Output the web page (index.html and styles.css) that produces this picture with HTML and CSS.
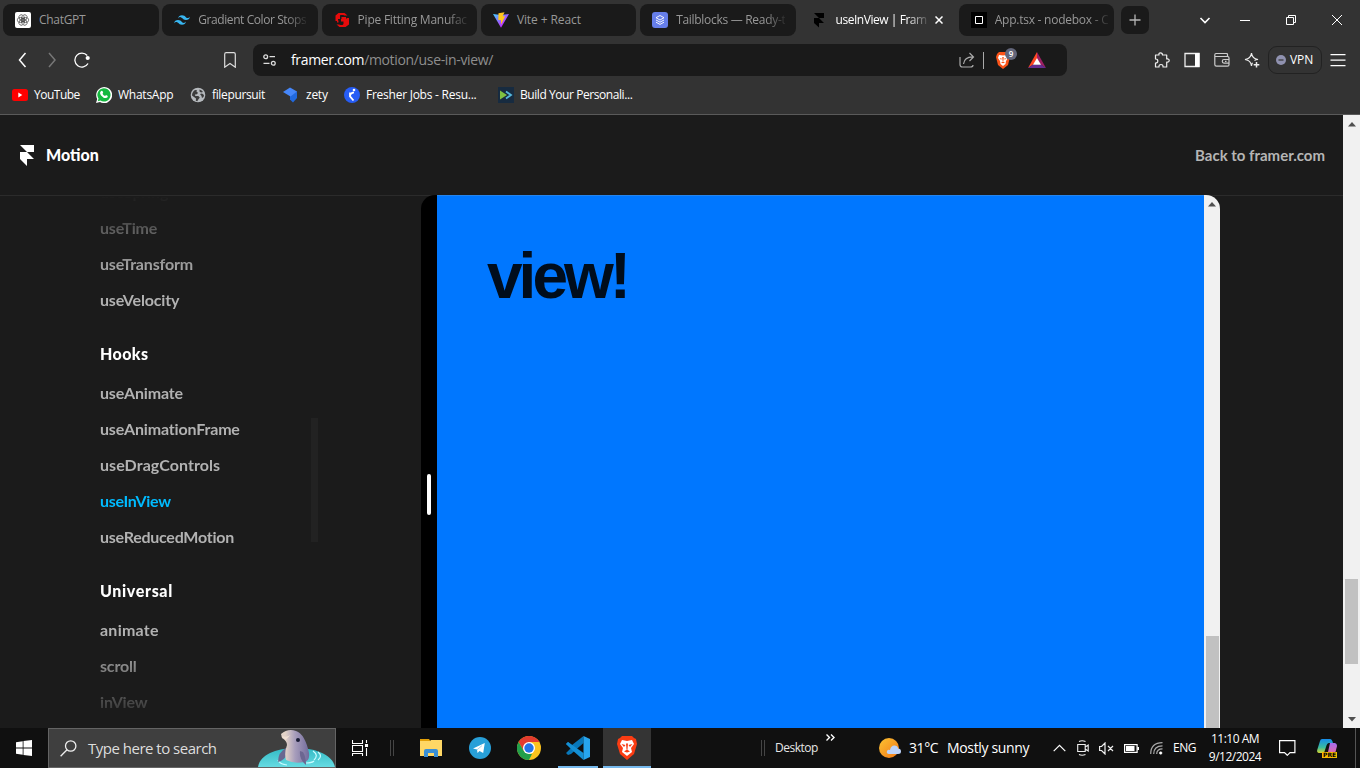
FILE: index.html
```html
<!DOCTYPE html>
<html lang="en">
<head>
<meta charset="utf-8">
<title>useInView | Framer for Developers</title>
<link rel="stylesheet" href="styles.css">
</head>
<body>
<header class="chrome">
  <div class="tabs">
    <div class="tab"><svg width="16" height="16" viewBox="0 0 16 16"><rect width="16" height="16" rx="2" fill="#fff"/><g fill="none" stroke="#333" stroke-width=".6"><ellipse cx="8" cy="5.700" rx="2.600" ry="3.500" transform="rotate(30 8 8)"/><ellipse cx="8" cy="5.700" rx="2.600" ry="3.500" transform="rotate(90 8 8)"/><ellipse cx="8" cy="5.700" rx="2.600" ry="3.500" transform="rotate(150 8 8)"/><ellipse cx="8" cy="5.700" rx="2.600" ry="3.500" transform="rotate(210 8 8)"/><ellipse cx="8" cy="5.700" rx="2.600" ry="3.500" transform="rotate(270 8 8)"/><ellipse cx="8" cy="5.700" rx="2.600" ry="3.500" transform="rotate(330 8 8)"/></g></svg><span class="tab-title">ChatGPT</span></div>
    <div class="tab"><svg width="16" height="16" viewBox="0 0 24 24"><path fill="#38b6f1" d="M12 4.800q-4.800 0-6 4.800 1.800-2.400 4.200-1.800c.9.2 1.600.9 2.300 1.600C13.700 10.600 15 12 18 12q4.800 0 6-4.800-1.800 2.400-4.200 1.800c-.9-.2-1.600-.9-2.300-1.600C16.300 6.200 15 4.800 12 4.800zM6 12q-4.800 0-6 4.800 1.800-2.400 4.200-1.800c.9.2 1.600.9 2.300 1.600 1.200 1.200 2.500 2.600 5.500 2.600q4.800 0 6-4.800-1.800 2.400-4.200 1.800c-.9-.2-1.600-.9-2.300-1.600C10.300 13.400 9 12 6 12z"/></svg><span class="tab-title t-fade t-gradient">Gradient Color Stops</span></div>
    <div class="tab"><svg width="16" height="16" viewBox="0 0 16 16"><path fill="#e60b0b" d="M4.500 1h6l3 2.500h-3L9 3H6.500L6 3.500V7H4v2H1.500V3.500zM11.500 15h-6L2.500 12.500H5l1.500.5h2l1-1V9.500H7V7h5.500V6H15v6.500zM7.500 5H12v2H9.500v1.500H4.500v2H3V8.500h4.500z"/></svg><span class="tab-title t-fade t-pipe">Pipe Fitting Manufac</span></div>
    <div class="tab"><svg width="16" height="16" viewBox="0 0 16 16"><defs><linearGradient id="vite" x2="1" y2="1"><stop stop-color="#41d1ff"/><stop offset=".7" stop-color="#bd34fe"/></linearGradient></defs><path fill="url(#vite)" d="M0 2l8 1 8-1-8 13.800z"/><path fill="#ffc51c" d="M5.500 1.200l6-1-1.800 4h2.500L8 12.500V8H5.300z"/></svg><span class="tab-title t-vite">Vite + React</span></div>
    <div class="tab"><svg width="16" height="16" viewBox="0 0 16 16"><rect width="16" height="16" rx="3" fill="#667eea"/><g fill="none" stroke="#fff" stroke-width=".9"><path d="M8 3.500L12 5.700 8 8 4 5.700zM4 8l4 2.200L12 8M4 10.200l4 2.200 4-2.200"/></g></svg><span class="tab-title t-fade t-tail">Tailblocks — Ready-t</span></div>
    <div class="tab tab-active"><svg width="16" height="16" viewBox="0 0 16 16"><path d="M3 1h10v5H8zM3 6h5l5 5H8v4.500L3 11z"/></svg><span class="tab-title t-fade t-view">useInView | Fram</span><svg class="close" width="8" height="8" viewBox="0 0 8 8"><path d="M.5.5l7 7M7.500.5l-7 7" stroke="#fff" stroke-width="1.500"/></svg></div>
    <div class="tab"><svg width="16" height="16" viewBox="0 0 16 16"><path d="M0 0h16v16H0z"/><path fill="none" stroke="#fff" stroke-width="1" d="M4.500 4.500h7v7h-7z"/></svg><span class="tab-title t-fade t-app">App.tsx - nodebox - C</span></div>
    <div class="new-tab"><svg width="12" height="12" viewBox="0 0 12 12"><path d="M6 .5v11M.5 6h11" stroke="#b5b5b5" stroke-width="1.300"/></svg></div>
    <div class="window-controls">
      <svg width="12" height="12" viewBox="0 0 12 12"><path d="M1.500 4L6 8.500 10.500 4" fill="none" stroke="#fff" stroke-width="1.600"/></svg>
      <svg width="10" height="12" viewBox="0 0 10 12"><path d="M0 6.500h10" stroke="#fff"/></svg>
      <svg class="restore" width="11" height="12" viewBox="0 0 11 12"><path d="M.5 3.500h7v7h-7zM2.500 3V1.500h7v7H8" fill="none" stroke="#fff"/></svg>
      <svg width="12" height="12" viewBox="0 0 12 12"><path d="M1 1l10 10M11 1L1 11" stroke="#fff"/></svg>
    </div>
  </div>

  <div class="toolbar">
    <svg width="16" height="16" viewBox="0 0 16 16"><path d="M11.500 1L5.500 8l6 7" fill="none" stroke="#fff" stroke-width="1.500"/></svg>
    <svg width="16" height="16" viewBox="0 0 16 16"><path d="M5 1l6 7-6 7" fill="none" stroke="#777" stroke-width="1.500"/></svg>
    <svg width="17" height="16" viewBox="0 0 17 16"><path d="M14 11.500A7 7 0 1 1 13.200 3.500" fill="none" stroke="#fff" stroke-width="1.300"/><circle cx="13.700" cy="6" r="2.100" fill="#fff"/></svg>
    <svg width="16" height="16" viewBox="0 0 16 16"><path d="M2.700 2.200q0-1.500 1.500-1.500h7.600q1.500 0 1.500 1.500v13L8 11.500l-5.300 3.700z" fill="none" stroke="#ddd" stroke-width="1.200"/></svg>
    <div class="address">
      <svg width="13" height="12" viewBox="0 0 13 12" fill="none" stroke="#ddd" stroke-width="1.300"><circle cx="2.700" cy="2.700" r="1.900"/><circle cx="10.300" cy="9.300" r="1.900"/><path d="M6.500 2.700H12M.5 9.300H6.500"/></svg>
      <span class="url"><b>framer.com</b>/motion/use-in-view/</span>
      <svg width="17" height="16" viewBox="0 0 17 16" fill="none" stroke="#aaa" stroke-width="1.200"><path d="M1 5v7.500Q1 15 3.500 15h8q2.500 0 2.500-2M10.500 1l4 4-4 4M14.500 5q-9-.5-10 7"/></svg>
      <i class="divider"></i>
      <div class="shield"><svg width="16" height="18" viewBox="0 0 16 18"><path fill="#fb5419" d="M4 1h8l2 2 1 3-2 8-5 4-5-4L1 6l1-3z"/><path fill="#fff" d="M4 4l4 .5 4-.5 1 3-2 3-.5 3L8 15l-2.500-2L5 10 3 7z"/><path fill="#fb5419" d="M4.500 7l2.500.7-1 1zM11.500 7L9 7.700l1 1zM7.200 6h1.600l-.4 4h-.8zM6 11.500l2-1 2 1-2 .8z"/></svg><span class="count">9</span></div>
      <svg width="18" height="16" viewBox="0 0 18 16"><path fill="#ff4724" d="M9 0L0 16l9-6z"/><path fill="#9e1f63" d="M9 0l9 16-9-6z"/><path fill="#662d91" d="M0 16l5-3.500h8l5 3.500z"/><path fill="#fff" d="M9 6l4 6.800H5z"/></svg>
    </div>
    <svg width="16" height="16" viewBox="0 0 16 16"><path d="M1.500 3H5Q4.500.8 6.500.8T8.500 3h4.200v4q2.500-.3 2.500 1.500t-2.500 1.500v5H9q.2-2.500-2-2.500T5 15H1.500v-4q2.300 0 2.300-2T1.500 7z" fill="none" stroke="#eee" stroke-width="1.200" stroke-linejoin="round"/></svg>
    <svg width="16" height="16" viewBox="0 0 16 16"><path d="M1 1.500h14v13H1z" fill="none" stroke="#eee" stroke-width="1.300"/><path fill="#fff" d="M11 1h4.500v14H11z"/></svg>
    <svg width="16" height="16" viewBox="0 0 16 16" fill="none" stroke="#ccc" stroke-width="1.200"><path d="M13.500 5V2.500q0-1-1-1H2Q.8 1.500.8 3v9.500q0 1.700 1.700 1.700h11q1.500 0 1.500-1.500V6q0-1.500-1.500-1.500H1M15.500 7.500H10q-1.700 0-1.700 1.800t1.700 1.800h5.500M11 9.300h1.500"/></svg>
    <svg width="16" height="16" viewBox="0 0 16 16"><path d="M7.500 1Q8 6.500 14 7.500q-2.500.3-3.500 1M7.500 1Q7 6.500 1 7.500q6 .8 6.500 6.500.2-2 1-3.300" fill="none" stroke="#eee" stroke-width="1.200"/><path d="M12.500 10v5.500M9.700 12.700h5.600" stroke="#eee" stroke-width="1.500"/></svg>
    <div class="vpn"><svg width="10" height="10" viewBox="0 0 10 10"><circle cx="5" cy="5" r="5" fill="#9092b0"/><path d="M2.500 5h5" stroke="#333" stroke-width="1.200"/></svg><span>VPN</span></div>
    <svg width="16" height="14" viewBox="0 0 16 14"><path d="M.5 1.700h15M.5 7.200h15M.5 12.700h15" stroke="#fff" stroke-width="1.200"/></svg>
  </div>

  <nav class="bookmarks">
    <a><svg width="16" height="16" viewBox="0 0 16 16"><rect y="2" width="16" height="12" rx="2.500" fill="#f00"/><path fill="#fff" d="M6.300 5.500v5l4-2.500z"/></svg><span class="b-yt">YouTube</span></a>
    <a><svg width="16" height="16" viewBox="0 0 16 16"><path fill="#fff" d="M0 16l1.200-4A8 8 0 1 1 4 14.900z"/><path fill="#15b83f" d="M1.800 14.200l.7-2.600A6.600 6.600 0 1 1 4.500 13.500z"/><path fill="#fff" d="M5.500 3.800l1 .2.700 1.700-.7 1q1 1.700 2.600 2.300l.9-1 1.800.9q.1 2-2 2.200-2.500 0-4.700-2.700-2.300-2.800.4-4.600z"/></svg><span>WhatsApp</span></a>
    <a><svg width="16" height="16" viewBox="0 0 16 16"><circle cx="8" cy="8" r="7.300" fill="#b5b9bd"/><path fill="#3c3c3c" d="M2 8.500Q2 5 5 3l2 .3-.5 1.500 1.500 1-1 1.500-2 .2.300 1.500h3l1.500 1.500-1.500 2-1 1.800-1.500-.5L6 11.500 4 10zM9.500 2.500q2.500.7 3.500 2.500l-2 .5-1.500-1zM10 7l2-.5 2 1.500-.5 2-1.500 1-.5-2z"/></svg><span class="b-file">filepursuit</span></a>
    <a><svg width="16" height="16" viewBox="0 0 16 16"><path fill="#2169df" d="M7 6l7-1.500V11l-4 4.500-3-3z"/><path fill="#4687fa" d="M0 5L7 .5l7 4L7.500 9.500z"/></svg><span class="b-zety">zety</span></a>
    <a><svg width="16" height="16" viewBox="0 0 16 16"><circle cx="8" cy="8" r="8" fill="#275df5"/><circle cx="10" cy="3" r="1.300" fill="#fff"/><path d="M10 5.300Q6 6 6 9.300l3.500 4.200M6 5.500V9" fill="none" stroke="#fff" stroke-width="1.800"/></svg><span>Fresher Jobs - Resu...</span></a>
    <a><svg width="16" height="16" viewBox="0 0 16 16"><path fill="#172b40" d="M0 0h16v16H0z"/><path fill="#7fc242" d="M2 3.500L9 8l-7 4.500z"/><path d="M8 4.500L13 8l-5 3.500" fill="none" stroke="#55b9de" stroke-width="1.800"/></svg><span class="b-build">Build Your Personali...</span></a>
  </nav>
</header>

<main class="viewport">
  <div class="site">
    <div class="site-header">
      <div class="brand"><svg width="14" height="21" viewBox="0 0 14 21"><path fill="#fff" d="M0 0h14v7H7zM0 7h7l7 7H7v7l-7-7z"/></svg><span>Motion</span></div>
      <a class="back">Back to framer.com</a>
    </div>
    <div class="site-body">
      <aside class="sidebar">
        <ul>
          <li>useSpring</li><li>useTime</li><li>useTransform</li><li>useVelocity</li>
          <li class="group">Hooks</li>
          <li>useAnimate</li><li>useAnimationFrame</li><li class="wide">useDragControls</li><li class="current">useInView</li><li class="tight">useReducedMotion</li>
          <li class="group universal">Universal</li>
          <li class="animate">animate</li><li>scroll</li><li>inView</li>
        </ul>
        <div class="side-thumb"></div>
      </aside>
      <section class="sandbox">
        <div class="resize"><i></i></div>
        <div class="demo"><h1>view!</h1></div>
        <div class="scrollbar"><svg width="8" height="5" viewBox="0 0 8 5"><path fill="#505050" d="M4 0l4 4.500H0z"/></svg><i class="thumb inner-thumb"></i></div>
      </section>
    </div>
  </div>
  <div class="scrollbar page-scroll"><svg width="8" height="5" viewBox="0 0 8 5"><path fill="#505050" d="M4 0l4 4.500H0z"/></svg><i class="thumb"></i><svg width="8" height="5" viewBox="0 0 8 5"><path fill="#505050" d="M0 0h8L4 4.500z"/></svg></div>
</main>

<footer class="taskbar">
  <svg class="start" width="16" height="16" viewBox="0 0 16 16"><path fill="#fff" d="M0 2.200L6.700 1.200v6.400H0zM7.500 1.100L16 0v7.600H7.500zM0 8.400h6.700v6.400L0 13.800zM7.500 8.400H16V16l-8.500-1.100z"/></svg>
  <div class="search">
    <svg width="17" height="17" viewBox="0 0 17 17" fill="none" stroke="#eee" stroke-width="1.300"><circle cx="10.700" cy="6" r="5.200"/><path d="M7 9.700L.6 16.300"/></svg>
    <span>Type here to search</span>
    <svg class="dolphin" width="77" height="38" viewBox="0 0 77 38"><defs><linearGradient id="fin" x1="0" x2="1"><stop offset=".15" stop-color="#e3d3c8"/><stop offset=".5" stop-color="#a79dbb"/><stop offset="1" stop-color="#716b9d"/></linearGradient><linearGradient id="pool" x2="0" y2="1"><stop stop-color="#31b9c4"/><stop offset="1" stop-color="#66dbe2"/></linearGradient></defs><path fill="url(#pool)" d="M0 38C2 25 19 19 39 19s36 8 38 19z"/><path d="M20 31q1 4 9 5M55 22q6 4 1 9M60 23q5 4 0 8M48 34q6 0 8-2" fill="none" stroke="#c9fbff" stroke-width="1.200"/><path fill="#696891" d="M28 19q-8 4-8 14 7-2 9-8z"/><path fill="url(#fin)" d="M23 5Q30-1 38 2q9 3 13 22 1 8-5 9-10 2-18-2-2-7 1-15 0-4-5-7z"/><path fill="#6c6691" d="M42 22q-1 8 6 14 0-8-3-13z"/><path fill="#f0dfd3" d="M23.500 7q5 2 9-1l-5 5z"/><circle cx="40" cy="11" r="2" fill="#191c36"/></svg>
  </div>
  <svg class="task-view" width="17" height="16" viewBox="0 0 17 16" fill="none" stroke="#fff" stroke-width="1.100"><path d="M.5 0v3.500h10V0M.5 5.500h10v6H.5zM.5 16v-2.500h10V16M14.500 0v3M14.500 8v8"/><path fill="#fff" d="M13.500 4.500h2v2h-2z"/></svg>
  <i class="grip"></i>
  <svg class="explorer" width="22" height="20" viewBox="0 0 22 20"><path fill="#e3a008" d="M0 1h9l2 3H0z"/><path fill="#ffd765" d="M0 3h10l1-1h11v16H0z"/><path fill="#3b8fd4" d="M4 19v-6q0-2 2-2h10q2 0 2 2v6h-4v-4H8v4z"/></svg>
  <svg class="telegram" width="22" height="22" viewBox="0 0 22 22"><circle cx="11" cy="11" r="11" fill="#289fd8"/><path fill="#fff" d="M4 11.500L15.800 6l-1.600 10-3.700-2-2 2-.5-3.500z"/><path d="M8 12.800l5-4.200" stroke="#9ccbe4" stroke-width=".8"/></svg>
  <svg class="gchrome" width="24" height="24" viewBox="0 0 24 24"><circle cx="12" cy="12" r="12" fill="#fcc31e"/><path fill="#e33b2e" d="M1.600 6A12 12 0 0 1 22.400 6H12l-5.200 9z"/><path fill="#229f4b" d="M1.600 6L6.800 15 12 18l3 0-3 6A12 12 0 0 1 1.600 6z"/><circle cx="12" cy="12" r="6" fill="#fff"/><circle cx="12" cy="12" r="4.700" fill="#2473e8"/></svg>
  <div class="app app-code"><svg width="24" height="24" viewBox="0 0 24 24"><path fill="#0877b9" d="M0 8l2-2 4 3L17.500 0v7L5 18l-3 1-2-2 5-5z"/><path fill="#148fd4" d="M0 8l2-2 15.500 11v7L5.500 13.500z"/><path fill="#27a5ee" d="M17.500 0L24 3v18l-6.500 3z"/></svg></div>
  <div class="app app-brave"><svg width="20" height="24" viewBox="0 0 20 24"><path fill="#fa3c13" d="M5 0h10l2 2 2 1 1 5-3 10-7 6-7-6L0 8l1-5 2-1z"/><path fill="#fff" d="M5 4l5 1 5-1 2 4-3 4 1 4-5 4-5-4 1-4-3-4z"/><path fill="#fa3c13" d="M4.500 8l4 1-1.500 2zM15.500 8l-4 1 1.500 2zM9 7.500h2l-.5 6h-1zM7 15.500l3-2 3 2-3 1z"/></svg></div>
  <i class="grip grip-right"></i>
  <span class="desktop">Desktop</span>
  <svg class="more" width="9" height="7" viewBox="0 0 9 7"><path d="M.5.5l3 3-3 3M5 .5l3 3-3 3" fill="none" stroke="#fff" stroke-width="1.400"/></svg>
  <svg class="sun" width="23" height="21" viewBox="0 0 23 21"><defs><linearGradient id="sun" x1="0" x2="1" y2="1"><stop stop-color="#fcc332"/><stop offset="1" stop-color="#f27818"/></linearGradient></defs><circle cx="10" cy="10" r="10" fill="url(#sun)"/><path fill="#bcd3fb" d="M10 16q-3-.5-2-3 1-2 3-1 1-5 5-4.500 3 .5 3 3 3 0 3 3 0 2.500-3 2.500z"/></svg>
  <span class="weather">31°C</span>
  <span class="weather sunny">Mostly sunny</span>
  <svg class="t-chevron" width="13" height="8" viewBox="0 0 13 8"><path d="M.7 7.200L6.500 1.400l5.800 5.800" fill="none" stroke="#fff" stroke-width="1.200"/></svg>
  <svg width="12" height="16" viewBox="0 0 12 16" fill="none" stroke="#eee" stroke-width="1.100"><path d="M.7 4.500h7.500v7H.7zM8.200 7l3-2v6l-3-2M2 1.500q3-1.500 6.500 0M2 14.500q3 1.500 6.500 0"/></svg>
  <svg width="15" height="13" viewBox="0 0 15 13" fill="none" stroke="#eee" stroke-width="1.200"><path d="M.6 4.500h2L6 1v11L2.600 8.500h-2zM9 4l5 5M14 4L9 9"/></svg>
  <svg width="15" height="9" viewBox="0 0 15 9"><path d="M.6.6h12.500v7.800H.6zM14.400 3v3" fill="none" stroke="#fff" stroke-width="1.200"/><path fill="#fff" d="M2 2h8.500v5H2z"/></svg>
  <svg width="13" height="13" viewBox="0 0 13 13" fill="none" stroke="#aaa" stroke-width="1.200"><path d="M.7 12Q.7.700 12.500.7M3.700 12Q3.700 3.800 12.500 3.800M6.700 12Q6.700 6.800 12.500 6.800"/><circle cx="10.700" cy="11" r="1.300" fill="#fff" stroke="#fff" stroke-width=".5"/></svg>
  <span class="lang">ENG</span>
  <div class="clock"><span>11:10 AM</span><span>9/12/2024</span></div>
  <svg width="17" height="16" viewBox="0 0 17 16"><path d="M.6.6h15.300v12H11l-2.700 2.700L5.500 12.600H.6z" fill="none" stroke="#fff" stroke-width="1.200"/></svg>
  <div class="copilot"><svg width="20" height="19" viewBox="0 0 20 19"><defs><linearGradient id="cp1" x2="0" y2="1"><stop stop-color="#168ceb"/><stop offset=".6" stop-color="#3abb9f"/><stop offset="1" stop-color="#d6d52c"/></linearGradient><linearGradient id="cp2" x2="0" y2="1"><stop stop-color="#a36df0"/><stop offset="1" stop-color="#ff6989"/></linearGradient></defs><path fill="url(#cp1)" d="M5 0h8q2 0 3 4h-4q-2 0-3 4l-2 6H3q-4 0-2.500-4L3 2q.5-2 2-2z"/><path fill="url(#cp2)" d="M13 4h5q3 1 1.500 5L18 15q-1 3-4 3H7q3-1 4-5z"/></svg><span>PRE</span></div>
  <i class="show-desktop"></i>
</footer>
</body>
</html>
```
FILE: styles.css
```css
* { box-sizing: border-box; }
body { margin: 0; width: 1360px; height: 768px; overflow: hidden; display: flex; flex-direction: column; background: #1b1b1b; font: 12px/16px "Open Sans", "Noto Sans", sans-serif; color: #fff; }
svg { display: block; flex: none; }
span { white-space: nowrap; }

/* Browser frame */
.chrome { height: 115px; background: #333; border-bottom: 1px solid #5a5a5a; display: flex; flex-direction: column; }
.tabs { height: 40px; display: flex; padding: 4px 0 4px 3px; gap: 3.800px; }
.tab { width: 155.500px; height: 32px; border-radius: 8px; background: #1a1a1a; display: flex; align-items: center; padding: 0 5px 0 12px; gap: 8px; color: #989898; }
.tab-title { letter-spacing: -.3px; }
.t-fade { -webkit-mask-image: linear-gradient(90deg, #000 calc(100% - 20px), rgba(0, 0, 0, .15)); mask-image: linear-gradient(90deg, #000 calc(100% - 20px), rgba(0, 0, 0, .15)); }
.t-gradient { letter-spacing: -.42px; }
.t-pipe { letter-spacing: -.23px; }
.t-vite { letter-spacing: -.1px; }
.t-tail { letter-spacing: -.3px; }
.t-view { letter-spacing: -.45px; }
.t-app { letter-spacing: -.25px; }
.tab-active { background: none; color: #fff; }
.close { margin: 0 11px 0 auto; }
.new-tab { width: 28px; height: 28px; margin: 2px 0 0 3px; border-radius: 7px; background: #1a1a1a; display: grid; place-items: center; }
.window-controls { flex: 1; display: grid; grid-template-columns: 41px 46px 45px 12px; justify-content: end; align-items: center; padding-right: 17px; }

.toolbar { height: 40px; display: grid; grid-template-columns: 30px 30px 148px 31px 901px 30px 30px 30px 24px 62px 16px; align-items: center; padding-left: 14px; }
.address { width: 814px; height: 32px; border-radius: 8px; background: #1a1a1a; display: grid; grid-template-columns: 28px 668px 24px 12px 33px 18px; align-items: center; padding-left: 10px; }
.url { color: #8e8e8e; font-size: 14px; letter-spacing: -.34px; }
.url b { color: #fff; font-weight: 400; }
.divider { width: 1px; height: 17px; background: #aaa; }
.shield { position: relative; width: 16px; }
.count { position: absolute; left: 10px; top: -3px; width: 12px; height: 12px; border-radius: 50%; background: #63667a; font-size: 8px; line-height: 12px; text-align: center; font-weight: 600; }
.vpn { width: 54px; height: 28px; border: 1px solid #222; border-radius: 9px; display: flex; align-items: center; padding-left: 7px; gap: 4px; letter-spacing: -.1px; }

.bookmarks { height: 30px; display: grid; grid-template-columns: 84px 94px 93px 61px 154px 150px; padding-left: 12px; align-items: center; letter-spacing: -.25px; }
.bookmarks a { display: flex; align-items: center; gap: 6px; }
.b-yt { letter-spacing: -.5px; }
.b-file { letter-spacing: -.35px; }
.b-zety { margin-left: 1px; }
.b-build { letter-spacing: -.43px; }

/* Documentation page */
.viewport { height: 613px; display: flex; }
.site { width: 1343px; display: flex; flex-direction: column; font-family: Lato, "Open Sans", sans-serif; }
.site-header { height: 80px; display: flex; align-items: center; justify-content: space-between; padding: 0 18px 0 20px; }
.brand { display: flex; align-items: center; gap: 12px; font-size: 16px; font-weight: 900; }
.back { color: #b5b5b5; font-size: 15px; font-weight: 700; padding-bottom: 1px; }
.site-body { height: 533px; display: grid; grid-template-columns: 421px 799px 123px; border-top: 1px solid #2b2b2b; }
.sidebar { height: 532px; overflow: hidden; display: flex; padding-left: 100px; }
.sidebar ul { width: 211px; height: 532px; overflow: hidden; margin: 0; padding: 0; list-style: none; -webkit-mask-image: linear-gradient(transparent, #000 80px, #000 447px, transparent); mask-image: linear-gradient(transparent, #000 80px, #000 447px, transparent); }
.sidebar li { height: 36px; line-height: 34px; font-size: 16px; font-weight: 700; color: #b2b2b2; letter-spacing: -.16px; }
.sidebar li:first-child { margin-top: -21px; }
.sidebar .group { height: 57px; padding-top: 13px; line-height: 44px; font-weight: 900; color: #fff; letter-spacing: .4px; }
.sidebar .universal { letter-spacing: .65px; }
.sidebar .wide { letter-spacing: .07px; }
.sidebar .animate { letter-spacing: .25px; }
.sidebar .tight { letter-spacing: -.25px; }
.sidebar .current { color: #0bf; letter-spacing: -.3px; }
.side-thumb { width: 7px; height: 124px; margin-top: 222px; background: #222; }
.sandbox { height: 533px; margin-top: -1px; display: grid; grid-template-columns: 16px 767px 16px; border-radius: 14px 14px 0 0; overflow: hidden; }
.resize { background: #000; padding: 279px 0 0 6px; }
.resize i { display: block; width: 4px; height: 41px; border-radius: 2px; background: #fff; }
.demo { background: #07f; padding: 40px 50px; border-top: 1px solid #2585ee; }
.demo h1 { margin: 0; font: 700 64px/80px "Liberation Sans", Arial, sans-serif; letter-spacing: -4px; color: #000d1c; }
.scrollbar { background: #f1f1f1; display: flex; flex-direction: column; align-items: center; padding-top: 7px; }
.thumb { display: block; width: 13px; background: #c1c1c1; height: 85px; }
.inner-thumb { margin-top: 429px; height: 92px; }
.page-scroll { width: 17px; padding: 7px 0 6px; }
.page-scroll .thumb { margin: 452px 0 auto; }

/* Taskbar */
.taskbar { height: 40px; background: #101010; display: grid; grid-template-columns: 48px 304px 38px 30px 49px 48px 41px 45px 158px 14px 51px 53px 30px 38px 106px 24px 22px 25px 26px 23px 31px 75px 38px 38px 1px; align-items: center; }
.start { margin-left: 16px; }
.search { width: 288px; height: 40px; border: 1px solid #646464; background: #3f3f3f; display: flex; align-items: center; padding-left: 11px; gap: 11px; font-size: 15px; color: #ddd; letter-spacing: -.5px; }
.dolphin { margin: 0 0 0 auto; }
.grip { width: 4px; height: 16px; border: solid #454545; border-width: 0 1px; }
.app { height: 40px; width: 40px; display: grid; place-items: center; border-bottom: 2px solid #76b9ed; padding-top: 2px; }
.app-brave { width: 48px; background: #343434; }
.desktop { letter-spacing: -.5px; color: #e6e6e6; }
.more { margin-top: -21px; }
.weather { font-size: 14px; letter-spacing: -.4px; }
.sunny { letter-spacing: -.35px; }
.lang { letter-spacing: -.5px; }
.clock { width: 62px; display: flex; flex-direction: column; align-items: center; line-height: 18px; letter-spacing: -.5px; }
.copilot { position: relative; width: 20px; }
.copilot span { position: absolute; left: 5px; top: 13px; padding: 0 1px; background: #f8b900; color: #000; font: 700 6px/6px "DejaVu Sans", sans-serif; }
.show-desktop { width: 1px; height: 40px; background: #555; }
```
